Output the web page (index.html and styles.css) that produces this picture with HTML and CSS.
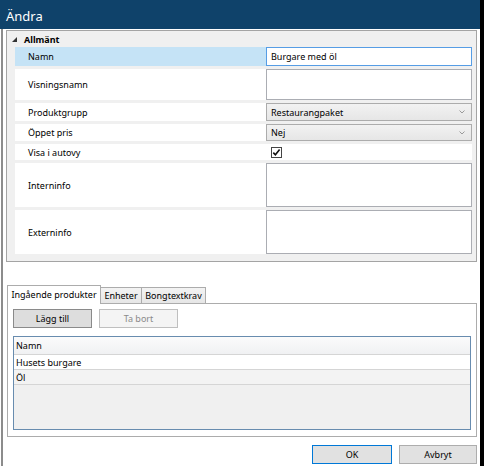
FILE: index.html
```html
<!DOCTYPE html>
<html lang="sv">
<head>
    <meta charset="UTF-8">
    <title>Ändra</title>
    <link rel="stylesheet" href="styles.css">
</head>
<body>
    <div class="window">
        <div class="titlebar">Ändra</div>
        <div class="client">
            <!-- Egenskapslista -->
            <div class="propgrid">
                <div class="category">
                    <svg class="expander" width="5" height="5" viewBox="0 0 5 5"><polygon points="5,0 5,5 0,5" fill="#333"/></svg>
                    <span>Allmänt</span>
                </div>
                <div class="rows">
                    <div class="row row-selected h19">
                        <div class="label">Namn</div>
                        <div class="value"><div class="textbox focused">Burgare med öl</div></div>
                    </div>
                    <div class="row h31">
                        <div class="label">Visningsnamn</div>
                        <div class="value"><div class="textbox"></div></div>
                    </div>
                    <div class="row h18">
                        <div class="label">Produktgrupp</div>
                        <div class="value">
                            <div class="combo">
                                <span>Restaurangpaket</span>
                                <svg width="6" height="4" viewBox="0 0 6 4"><polyline points="0.5,0.5 3,3 5.5,0.5" fill="none" stroke="#9a9a9a"/></svg>
                            </div>
                        </div>
                    </div>
                    <div class="row h17">
                        <div class="label">Öppet pris</div>
                        <div class="value">
                            <div class="combo">
                                <span>Nej</span>
                                <svg width="6" height="4" viewBox="0 0 6 4"><polyline points="0.5,0.5 3,3 5.5,0.5" fill="none" stroke="#9a9a9a"/></svg>
                            </div>
                        </div>
                    </div>
                    <div class="row h16">
                        <div class="label">Visa i autovy</div>
                        <div class="value check-cell">
                            <svg width="11" height="11" viewBox="0 0 11 11">
                                <rect x="0.5" y="0.5" width="10" height="10" fill="#fff" stroke="#444"/>
                                <polyline points="2.3,5.6 4.4,7.8 8.6,2.6" fill="none" stroke="#111" stroke-width="1.6"/>
                            </svg>
                        </div>
                    </div>
                    <div class="row h44">
                        <div class="label">Interninfo</div>
                        <div class="value"><div class="textbox"></div></div>
                    </div>
                    <div class="row h44">
                        <div class="label">Externinfo</div>
                        <div class="value"><div class="textbox"></div></div>
                    </div>
                </div>
            </div>

            <!-- Flikar -->
            <div class="tabs">
                <div class="tabstrip">
                    <div class="tab active w-ingaende">Ingående produkter</div>
                    <div class="tab w-enheter">Enheter</div>
                    <div class="tab w-bong">Bongtextkrav</div>
                </div>
                <div class="tabpanel">
                    <div class="toolbar">
                        <button class="btn">Lägg till</button>
                        <button class="btn" disabled>Ta bort</button>
                    </div>
                    <div class="datagrid">
                        <div class="dg-header">Namn</div>
                        <div class="dg-row">Husets burgare</div>
                        <div class="dg-row alt">Öl</div>
                    </div>
                </div>
            </div>

            <div class="footer">
                <button class="btn dialog default">OK</button>
                <button class="btn dialog">Avbryt</button>
            </div>
        </div>
    </div>
</body>
</html>
```

FILE: styles.css
```css
body {
    margin: 0;
    background: #fff;
    font-family: "Noto Sans", sans-serif;
    font-size: 9px;
    color: #000;
}

.window {
    width: 480px;
    height: 466px;
    border-right: 4px solid #000;
    display: flex;
    flex-direction: column;
}

.titlebar {
    flex: none;
    height: 29px;
    box-sizing: border-box;
    padding: 3px 0 0 6px;
    background: #0f426a;
    color: #fff;
    font-size: 13px;
    display: flex;
    align-items: center;
}

.client {
    flex: 1;
    margin-left: 1px;
    border-left: 2px solid #8c8c8c;
    display: flex;
    flex-direction: column;
}

/* Egenskapslista */
.propgrid {
    margin: 1px 3px 0 3px;
    border: 1px solid #a4a4a4;
    background: #f0f0f0;
    padding: 1px 4px 7px 0;
}

.category {
    height: 15px;
    display: flex;
    align-items: center;
    font-weight: bold;
}

.expander {
    margin: 0 7px 0 5px;
}

.rows {
    margin-left: 8px;
    display: flex;
    flex-direction: column;
    gap: 3px;
}

.row {
    display: grid;
    grid-template-columns: 251px 1fr;
    background: #fff;
}

.h16 { height: 16px; }
.h17 { height: 17px; }
.h18 { height: 18px; }
.h19 { height: 19px; }
.h31 { height: 31px; }
.h44 { height: 44px; }

.label {
    padding-left: 13px;
    display: flex;
    align-items: center;
}

.row-selected .label {
    background: #c5e3f6;
}

.value {
    display: flex;
}

.textbox {
    flex: 1;
    box-sizing: border-box;
    border: 1px solid #abadb3;
    background: #fff;
    padding-left: 4px;
    display: flex;
    align-items: center;
}

.textbox.focused {
    border-color: #569de5;
}

.combo {
    flex: 1;
    box-sizing: border-box;
    border: 1px solid #acacac;
    background: linear-gradient(#f2f2f2, #e6e6e6);
    padding: 0 6px 0 4px;
    display: flex;
    align-items: center;
    justify-content: space-between;
}

.check-cell {
    align-items: center;
    padding-left: 5px;
}

/* Flikar */
.tabs {
    margin: 23px 3px 0 4px;
}

.tabstrip {
    display: flex;
    align-items: flex-end;
    height: 18px;
}

.tab {
    box-sizing: border-box;
    height: 16px;
    border: 1px solid #acacac;
    border-bottom: none;
    background: linear-gradient(#f3f3f3, #e6e6e6);
    margin-left: -1px;
    display: flex;
    align-items: center;
    justify-content: center;
}

.tab.active {
    height: 19px;
    margin: 0 0 -1px 0;
    background: #fff;
    position: relative;
    z-index: 1;
    padding-bottom: 1px;
}

.w-ingaende { width: 94px; }
.w-enheter { width: 42px; }
.w-bong { width: 65px; }

.tabpanel {
    border: 1px solid #acacac;
    background: #fff;
    padding: 5px 5px 6px 5px;
}

.toolbar {
    display: flex;
    gap: 7px;
}

.btn {
    width: 79px;
    height: 19px;
    box-sizing: border-box;
    border: 1px solid #8a8a8a;
    background: #dddddd;
    font-family: "Noto Sans", sans-serif;
    font-size: 9px;
    color: #000;
    padding: 0;
}

.btn:disabled {
    border-color: #bfbfbf;
    background: #f4f4f4;
    color: #8a8a8a;
}

.datagrid {
    margin-top: 8px;
    height: 94px;
    box-sizing: border-box;
    border: 1px solid #688caf;
    background: #f0f0f0;
}

.dg-header {
    height: 18px;
    box-sizing: border-box;
    padding-left: 2px;
    border-bottom: 1px solid #d5d5d5;
    background: linear-gradient(#fbfbfb, #f0f1f3);
    display: flex;
    align-items: center;
}

.dg-row {
    height: 15px;
    box-sizing: border-box;
    padding-left: 2px;
    border-bottom: 1px solid #d5d5d5;
    background: #fff;
    display: flex;
    align-items: center;
}

.dg-row.alt {
    background: #f3f3f3;
}

/* Knappar längst ner */
.footer {
    margin: 8px 3px 0 0;
    display: flex;
    justify-content: flex-end;
    gap: 7px;
}

.btn.dialog {
    background: #e1e1e1;
    border-color: #adadad;
}

.btn.dialog:first-child {
    width: 80px;
}

.btn.dialog:last-child {
    width: 78px;
}

.btn.default {
    border-color: #0078d7;
}
```
